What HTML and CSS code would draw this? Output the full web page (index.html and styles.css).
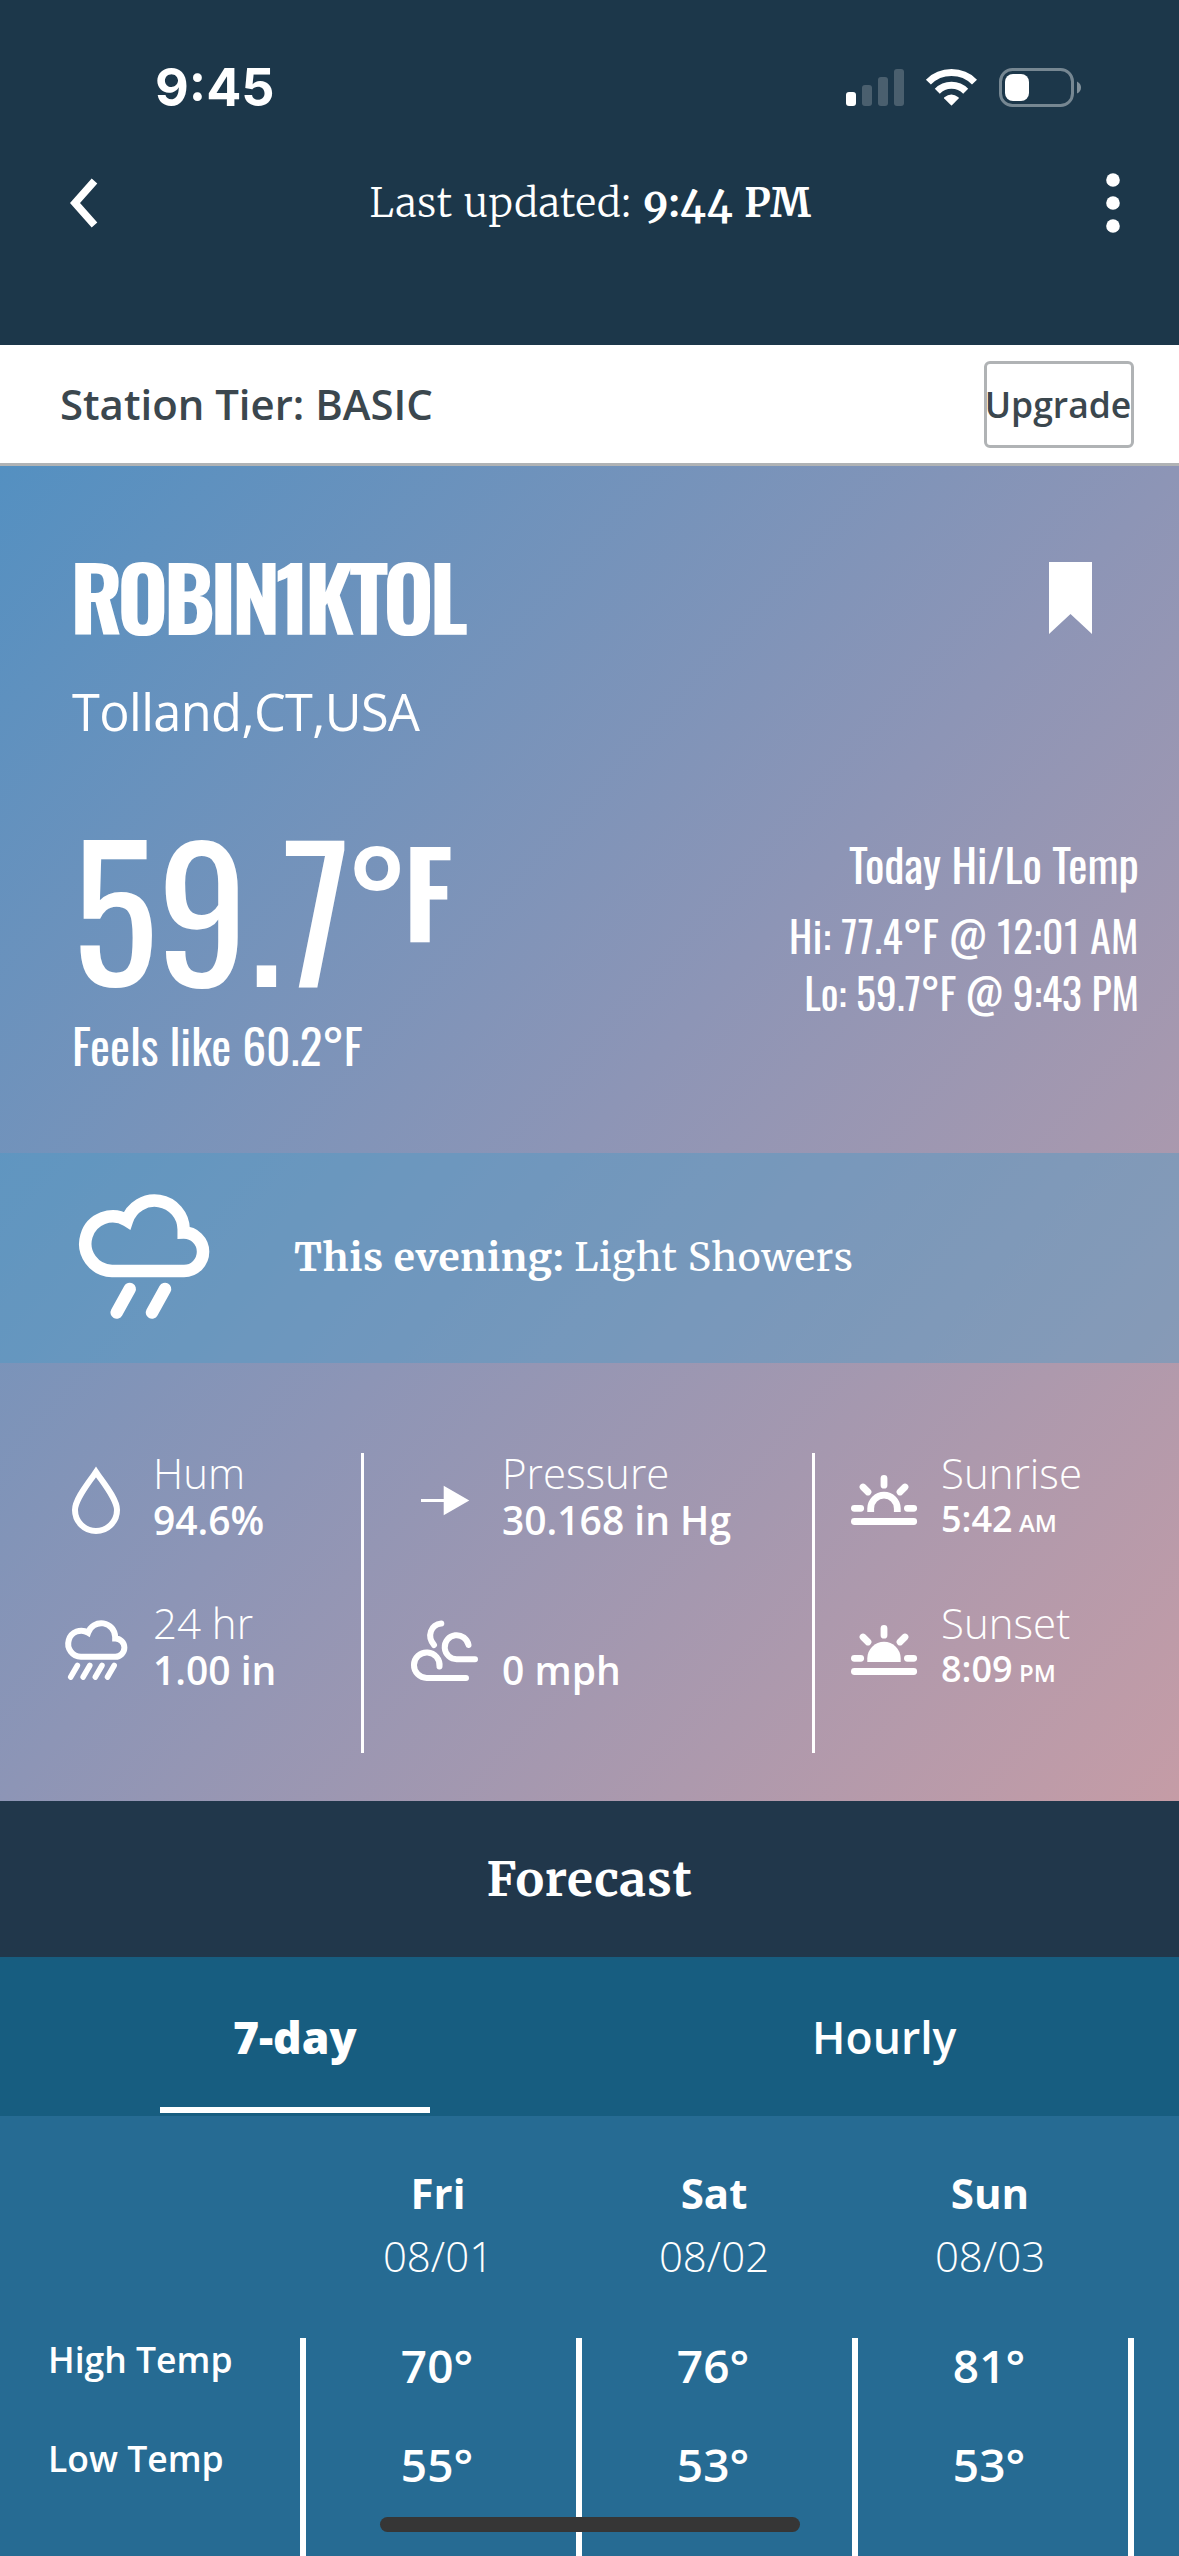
FILE: index.html
```html
<!DOCTYPE html>
<html lang="en">
<head>
<meta charset="utf-8">
<title>Weather Station</title>
<link rel="stylesheet" href="styles.css">
</head>
<body>
<div class="screen">
  <header class="header">
    <div class="status">
      <span class="clock">9:45</span>
      <svg class="status-icons" width="244" height="44" viewBox="24 16 244 44">
        <g fill="#fff">
          <rect x="26" y="42" width="10" height="14" rx="3"/>
          <g opacity=".2">
            <rect x="42" y="35" width="10" height="21" rx="3"/>
            <rect x="58" y="27" width="10" height="29" rx="3"/>
            <rect x="74" y="19" width="10" height="37" rx="3"/>
          </g>
          <path d="M131.300 55.500 124.200 48.500Q123.700 47.900 124.400 47.300Q131.300 41.600 138.400 47.300Q139.100 47.900 138.600 48.500L131.700 55.500Z"/>
        </g>
        <g fill="none" stroke="#fff" stroke-width="7">
          <path d="M108.400 32.100C121 19.400 142 19.400 154.500 32.100"/>
          <path d="M117.300 41.200C125 33.300 138 33.300 145.700 41.200"/>
        </g>
        <rect x="180.500" y="19.500" width="72" height="36" rx="12" fill="none" stroke="#fff" stroke-opacity=".4" stroke-width="3"/>
        <rect x="185" y="24" width="24" height="27" rx="8" fill="#fff"/>
        <path d="M257 31.500Q261 33.500 261 37.500T257 43.500Z" fill="#fff" fill-opacity=".45"/>
      </svg>
    </div>
    <nav class="nav">
      <svg width="28" height="50" viewBox="0 0 28 50"><path d="M24.500 3 5 25 24.500 47" fill="none" stroke="#fff" stroke-width="7.500"/></svg>
      <p class="updated">Last updated: <b>9:44 PM</b></p>
      <svg width="14" height="60" viewBox="0 0 14 60" fill="#fff"><circle cx="7" cy="7" r="6.800"/><circle cx="7" cy="30" r="6.800"/><circle cx="7" cy="53" r="6.800"/></svg>
    </nav>
  </header>

  <section class="tier">
    <span class="tier-name">Station Tier: BASIC</span>
    <button class="upgrade">Upgrade</button>
  </section>

  <main class="hero">
    <section class="current">
      <div class="title-row">
        <h1 class="station">ROBIN1KTOL</h1>
        <svg class="bookmark" width="43" height="72" viewBox="0 0 43 72"><path d="M0 0H43V72L21.500 52 0 72Z" fill="#fff"/></svg>
      </div>
      <p class="place">Tolland,CT,USA</p>
      <div class="temps">
        <div>
          <div class="temp"><span class="temp-value">59.7</span><span class="temp-unit">°F</span></div>
          <p class="feels">Feels like 60.2°F</p>
        </div>
        <div class="hilo">
          <p class="hilo-title">Today Hi/Lo Temp</p>
          <p class="hi">Hi: 77.4°F @ 12:01 AM</p>
          <p>Lo: 59.7°F @ 9:43 PM</p>
        </div>
      </div>
    </section>

    <section class="evening">
      <svg width="140" height="130" viewBox="34 23 140 130" fill="none" stroke="#fff" stroke-width="12.500">
        <path d="M72 101H144A19.200 19.200 0 0 0 143.700 62.600V59.500A29.100 29.100 0 0 0 87 50.500A27.300 27.300 0 1 0 72 101Z"/>
        <path d="M89.700 119 76.700 142.500M125 119 112 142.500" stroke-linecap="round"/>
      </svg>
      <p class="evening-text"><b>This evening:</b> Light Showers</p>
    </section>

    <section class="stats">
      <div class="stat-col">
        <div class="stat">
          <svg width="74" height="94" viewBox="20 9 74 94"><path d="M56 32C49 42.500 35 59 35 70A21 21 0 0 0 77 70C77 59 63 42.500 56 32Z" fill="none" stroke="#fff" stroke-width="6"/></svg>
          <div><p class="label">Hum</p><p class="value">94.6%</p></div>
        </div>
        <div class="stat">
          <svg width="74" height="94" viewBox="20 159 74 94" fill="none" stroke="#fff">
            <g transform="translate(6.600 168.600)"><path transform="scale(.477)" stroke-width="12.500" d="M72 101H144A19.200 19.200 0 0 0 143.700 62.600V59.500A29.100 29.100 0 0 0 87 50.500A27.300 27.300 0 1 0 72 101Z"/></g>
            <path d="M37.400 225.500 30.700 237M49.800 225.500 43.100 237M62 225.500 55.300 237M74.200 225.500 67.500 237" stroke-width="5.500" stroke-linecap="round"/>
          </svg>
          <div><p class="label">24 hr</p><p class="value">1.00 in</p></div>
        </div>
      </div>
      <div class="stat-col stat-mid">
        <div class="stat">
          <svg width="74" height="94" viewBox="370 9 74 94" fill="#fff"><path d="M381 59H404V62H381ZM403.700 45.700 429.300 60.500 403.700 75.300Z"/></svg>
          <div><p class="label">Pressure</p><p class="value">30.168 in Hg</p></div>
        </div>
        <div class="stat">
          <svg width="74" height="94" viewBox="370 159 74 94" fill="none" stroke="#fff" stroke-width="6" stroke-linecap="round">
            <path d="M401.300 183.500C391 184.500 386.500 196 394 205"/>
            <path d="M428.500 205A12 12 0 1 0 417 219.200H435"/>
            <path d="M399.500 226.500A12.800 12.800 0 1 0 387 238H426"/>
          </svg>
          <div><p class="label">&nbsp;</p><p class="value">0 mph</p></div>
        </div>
      </div>
      <div class="stat-col">
        <div class="stat">
          <svg width="74" height="94" viewBox="30 9 74 94" fill="none" stroke="#fff" stroke-width="6.800" stroke-linecap="round">
            <path d="M34.400 81.500H93.700M34.400 68.300H40.700M87.400 68.300H93.700M64 38.500V45.200M43 47 48 52M85 47 80 52"/>
            <path d="M50.700 71.900V68.500a13.300 13.300 0 0 1 26.600 0V71.900" stroke-linecap="butt"/>
          </svg>
          <div><p class="label">Sunrise</p><p class="time">5:42 <small>AM</small></p></div>
        </div>
        <div class="stat">
          <svg width="74" height="94" viewBox="30 9 74 94" fill="none" stroke="#fff" stroke-width="6.800" stroke-linecap="round">
            <path d="M34.400 81.500H93.700M34.400 68.300H40.700M87.400 68.300H93.700M64 38.500V45.200M43 47 48 52M85 47 80 52"/>
            <path d="M47.300 71.900V68.500a16.700 16.700 0 0 1 33.400 0V71.900Z" fill="#fff" stroke="none"/>
          </svg>
          <div><p class="label">Sunset</p><p class="time">8:09 <small>PM</small></p></div>
        </div>
      </div>
    </section>
  </main>

  <h2 class="forecast-title">Forecast</h2>
  <div class="tabs">
    <div class="tab active">7-day</div>
    <div class="tab">Hourly</div>
  </div>

  <section class="forecast">
    <div class="days">
      <div class="day"><b>Fri</b><span>08/01</span></div>
      <div class="day"><b>Sat</b><span>08/02</span></div>
      <div class="day"><b>Sun</b><span>08/03</span></div>
    </div>
    <div class="row"><span class="row-label">High Temp</span><span class="cell">70°</span><span class="cell">76°</span><span class="cell">81°</span><span class="cell"></span></div>
    <div class="row"><span class="row-label">Low Temp</span><span class="cell">55°</span><span class="cell">53°</span><span class="cell">53°</span><span class="cell"></span></div>
    <div class="row"><span class="row-label"></span><span class="cell"></span><span class="cell"></span><span class="cell"></span><span class="cell"></span></div>
  </section>
  <div class="home-indicator"></div>
</div>
</body>
</html>
```
FILE: styles.css
```css
* { box-sizing: border-box; margin: 0; padding: 0; }
body { background: #266b93; }
svg { display: block; flex: none; }

.screen {
  position: relative;
  width: 1179px;
  height: 2556px;
  overflow: hidden;
  color: #fff;
  font-family: "Open Sans", "Noto Sans", sans-serif;
}

/* Status bar and navigation */
.header { height: 345px; background: #1c374a; }
.status {
  display: flex;
  justify-content: space-between;
  align-items: flex-start;
  height: 173px;
  padding: 58px 91px 0 155px;
}
.status-icons { margin-top: 8px; }
.clock {
  font: 700 52px/60px Inter, "Liberation Sans", sans-serif;
}
.nav {
  display: flex;
  justify-content: space-between;
  align-items: center;
  height: 60px;
  padding: 0 59px 0 70px;
}
.updated {
  margin-right: 23px;
  font: 300 40px/59px Merriweather, "Noto Serif", "DejaVu Serif", serif;
  font-variant-numeric: oldstyle-nums;
  letter-spacing: .55px;
  word-spacing: 1px;
  white-space: nowrap;
}
.updated b { font-weight: 700; }

/* Tier bar */
.tier {
  display: flex;
  justify-content: space-between;
  align-items: center;
  height: 121px;
  padding: 0 45px 0 60px;
  background: #fff;
  border-bottom: 3px solid #b0b3b5;
  color: #3b474e;
}
.tier-name { padding-bottom: 1px; font-size: 41.900px; font-weight: 600; }
.upgrade {
  display: flex;
  align-items: center;
  justify-content: center;
  width: 150px;
  height: 87px;
  padding-right: 2px;
  border: 3px solid #b0b3b5;
  border-radius: 6px;
  background: #fff;
  color: #3b474e;
  font: 600 35.500px/50px "Open Sans", "Noto Sans", sans-serif;
}

/* Current conditions */
.hero {
  height: 1335px;
  background: linear-gradient(to bottom right, #5490c1, #8d95b6, #c59ca6);
}
.current { height: 687px; padding: 74px 40px 0 72px; }
.title-row {
  display: flex;
  justify-content: space-between;
  padding-right: 47px;
}
.station {
  margin-left: -2px;
  font: 700 88px/110px Oswald, "Roboto Condensed", sans-serif;
  letter-spacing: -5.100px;
}
.bookmark { margin-top: 22px; }
.place {
  margin-top: 27px;
  font-size: 50.500px;
  font-weight: 400;
  line-height: 70px;
  letter-spacing: -.6px;
}
.temps {
  display: flex;
  justify-content: space-between;
  margin-top: 59px;
  font-family: Oswald, "Roboto Condensed", sans-serif;
}
.temp { display: flex; height: 200px; }
.temp-value { font-size: 180px; line-height: 200px; }
.temp-unit {
  margin-left: -5px;
  padding-top: 18px;
  font-size: 117px;
  font-weight: 600;
  line-height: 130px;
  letter-spacing: -4px;
}
.feels { margin-top: 9px; font-size: 47.500px; line-height: 60px; }
.hilo { padding-top: 27px; font-size: 41.700px; line-height: 57px; text-align: right; }
.hilo-title { margin-bottom: 14px; font-size: 45.700px; line-height: 60px; }
.hi { letter-spacing: .4px; }

.evening {
  display: flex;
  align-items: center;
  height: 210px;
  padding: 0 0 0 74px;
  gap: 80px;
  background: rgba(70, 154, 200, .4);
}
.evening-text {
  font: 400 39px/60px Merriweather, "Noto Serif", "DejaVu Serif", serif;
  letter-spacing: .75px;
}
.evening-text b { letter-spacing: .6px; }

.stats { display: flex; height: 438px; padding-top: 86px; }
.stat-col {
  display: flex;
  flex-direction: column;
  gap: 56px;
  width: 361px;
  height: 304px;
  padding-left: 60px;
}
.stat-col:last-child { padding-left: 35px; }
.stat-mid {
  width: 454px;
  padding-left: 49px;
  background:
    linear-gradient(#fff, #fff) 0 4px / 3px 300px no-repeat,
    linear-gradient(#fff, #fff) 100% 4px / 3px 300px no-repeat;
}
.stat { display: flex; gap: 18px; height: 94px; white-space: nowrap; }
.stat-col:first-child .stat { gap: 19px; }
.stat-col:last-child .stat { gap: 17px; }
.label { font-size: 42px; font-weight: 300; line-height: 48px; }
.value { font-size: 39px; font-weight: 600; line-height: 46px; }
.time { font-size: 36px; font-weight: 600; line-height: 43px; }
.time small { margin-left: -3px; font-size: 24px; line-height: 1; }

/* Forecast */
.forecast-title {
  height: 156px;
  background: #21374b;
  font: 700 48px/156px Merriweather, "Noto Serif", "DejaVu Serif", serif;
  letter-spacing: .7px;
  text-align: center;
}
.tabs { display: flex; height: 159px; background: #175d80; }
.tab {
  display: flex;
  flex: 1;
  flex-direction: column;
  align-items: center;
  gap: 40px;
  padding-top: 50px;
  font-size: 44.500px;
  font-weight: 600;
  line-height: 60px;
}
.tab.active { font-weight: 800; }
.tab.active::after { content: ""; width: 270px; height: 6px; background: #fff; }
.forecast { height: 440px; padding-top: 47px; background: #266b93; }
.days {
  display: grid;
  grid-template-columns: repeat(3, 276px);
  padding: 0 0 52px 300px;
  font-size: 42px;
  line-height: 60px;
  text-align: center;
}
.day { display: flex; flex-direction: column; gap: 3px; }
.day span { font-weight: 300; }
.row { display: grid; grid-template-columns: 252px repeat(4, 276px); height: 99px; padding-left: 48px; }
.row-label { font-size: 35.500px; font-weight: 600; line-height: 42px; }
.cell {
  padding-right: 8px;
  border-left: 6px solid #fff;
  font-size: 46px;
  font-weight: 600;
  line-height: 54px;
  text-align: center;
}
.home-indicator {
  position: absolute;
  left: 380px;
  top: 2517px;
  width: 420px;
  height: 15px;
  border-radius: 8px;
  background: #363636;
}
```
